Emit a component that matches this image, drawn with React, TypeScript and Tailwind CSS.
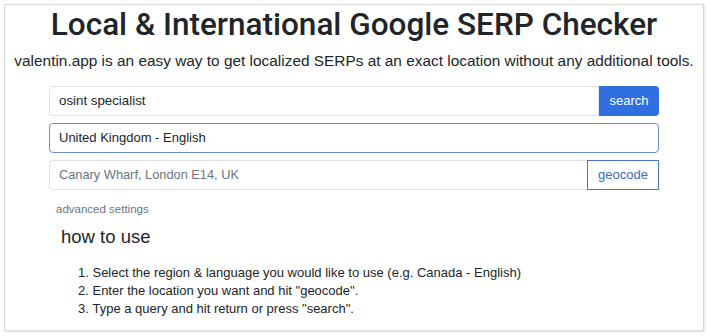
import React from "react";

export default function App() {
  return (
    <div className="w-[710px] h-[336px] bg-white pt-[4px] pl-[4px] pr-[6px] pb-[5px]" style={{ fontFamily: "'Liberation Sans', Arial, sans-serif" }}>
      <div className="h-full border border-[#d9d9d9] shadow-[1px_1px_2px_rgba(0,0,0,0.12)] flex flex-col items-center">
        <h1 className="text-[31.5px] leading-[40px] text-[#212529] font-medium whitespace-nowrap" style={{ fontFamily: "Roboto, 'Liberation Sans', sans-serif" }}>Local &amp; International Google SERP Checker</h1>
        <p className="mt-[4px] text-[15.4px] leading-[24px] text-[#212529] whitespace-nowrap">valentin.app is an easy way to get localized SERPs at an exact location without any additional tools.</p>
        <div className="w-[610px] mt-[13px] flex flex-col gap-[7px]">
          <div className="flex h-[30px]">
            <div className="flex-1 border border-[#dee2e6] rounded-l-[4px] px-[9px] flex items-center text-[13.3px] text-[#212529]">osint specialist</div>
            <button className="w-[60px] bg-[#2f6fdf] text-white text-[13px] rounded-r-[4px]">search</button>
          </div>
          <div className="h-[30px] border border-[#6a8fd4] rounded-[4px] px-[9px] flex items-center text-[13px] text-[#212529]">United Kingdom - English</div>
          <div className="flex h-[30px]">
            <div className="flex-1 border border-[#dee2e6] border-r-0 rounded-l-[4px] px-[9px] flex items-center text-[12.8px] text-[#6c757d]">Canary Wharf, London E14, UK</div>
            <button className="w-[72px] border border-[#4a75c6] text-[#3a6cc6] text-[13px]">geocode</button>
          </div>
        </div>
        <div className="w-[610px] pl-[7px] mt-[12px] text-[11.5px] leading-[14px] text-[#6c757d]">advanced settings</div>
        <div className="w-[610px] pl-[12px] mt-[9px] text-[18.5px] leading-[24px] text-[#212529]">how to use</div>
        <ol className="w-[610px] pl-[29px] mt-[15px] text-[13px] leading-[18px] text-[#212529] list-decimal list-inside">
          <li>Select the region &amp; language you would like to use (e.g. Canada - English)</li>
          <li>Enter the location you want and hit "geocode".</li>
          <li>Type a query and hit return or press "search".</li>
        </ol>
      </div>
    </div>
  );
}
